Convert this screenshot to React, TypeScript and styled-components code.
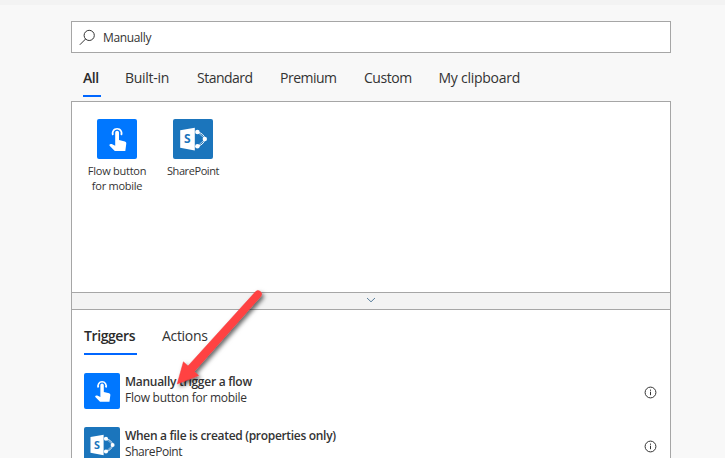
import React from 'react';
import styled, { createGlobalStyle } from 'styled-components';

const GlobalStyle = createGlobalStyle`
  *, *::before, *::after { box-sizing: border-box; }
  body {
    margin: 0;
    background: #f8f8f8;
    color: #333;
    font-family: "Open Sans", "Noto Sans", sans-serif;
    overflow: hidden;
  }
`;

const Page = styled.div`
  position: relative;
  display: flex;
  flex-direction: column;
  align-items: center;
  height: 458px;
  overflow: hidden;
`;

const TopStrip = styled.div`
  flex: none;
  align-self: stretch;
  height: 5px;
  margin-bottom: 16px;
  background: #f3f3f3;
`;

const Picker = styled.main`
  flex: none;
  width: 600px;
  margin-left: 17px;
`;

const SearchBox = styled.div`
  display: flex;
  align-items: center;
  height: 32px;
  padding: 0 7px;
  gap: 7px;
  background: #fff;
  border: 1px solid #a6a6a6;
`;

const Label = styled.span<{ $spacing: number }>`
  letter-spacing: ${p => p.$spacing}px;
  white-space: nowrap;
`;

const SearchText = styled.div`
  padding-top: 2px;
  font-size: 12px;
  line-height: 16px;
`;

const Tabs = styled.nav`
  display: flex;
  height: 48px;
  padding: 16px 0 0 12px;
`;

const Tab = styled.div<{ $active?: boolean; $width: number; $bar?: number }>`
  position: relative;
  flex: none;
  width: ${p => p.$width}px;
  height: 28px;
  font-size: 14px;
  line-height: 17px;
  font-weight: ${p => (p.$active ? 600 : 400)};
  color: ${p => (p.$active ? '#2b2b2b' : '#333')};

  &::after {
    content: '';
    position: absolute;
    left: 0;
    bottom: 0;
    width: ${p => p.$bar ?? 0}px;
    height: 2px;
    background: #0066ff;
  }
`;

const Results = styled.section`
  height: 400px;
  background: #fff;
  border: 1px solid #a6a6a6;
`;

const Connectors = styled.div`
  display: flex;
  height: 190px;
  padding: 17px 0 0 7px;
`;

const Connector = styled.div`
  display: flex;
  flex-direction: column;
  align-items: center;
  width: 76px;
  font-size: 11px;
  line-height: 15px;
  text-align: center;
`;

const ConnectorName = styled.div`
  display: flex;
  flex-direction: column;
  align-items: center;
  margin-top: 4px;
`;

const IconTile = styled.div<{ $size: number; $color: string }>`
  flex: none;
  width: ${p => p.$size}px;
  height: ${p => p.$size}px;
  border-radius: 2px;
  background: ${p => p.$color};

  svg { display: block; width: 100%; height: 100%; }
`;

const Divider = styled.div`
  display: flex;
  align-items: center;
  justify-content: center;
  height: 18px;
  padding-bottom: 2px;
  background: #f3f3f3;
  border: solid #a6a6a6;
  border-width: 1px 0;
`;

const OperationTabs = styled(Tabs)`
  height: 63px;
  padding-top: 17px;
`;

const Operation = styled.div`
  display: flex;
  align-items: center;
  height: 54px;
  padding: 0 13px 18px 12px;
`;

const OperationText = styled.div`
  display: flex;
  flex: 1;
  flex-direction: column;
  align-self: flex-start;
  padding: 1px 0 0 5px;
  font-size: 12px;
  line-height: 16px;
`;

const OperationTitle = styled.div`
  height: 16px;
  font-weight: 600;
`;

const OperationSource = styled.div`
  height: 16px;
`;

const InfoButton = styled.div`
  display: flex;
  padding-top: 2px;
`;

const ArrowOverlay = styled.svg`
  position: absolute;
  left: 165px;
  top: 280px;
  pointer-events: none;
`;

const TouchIcon = ({ size }: { size: number }) => (
  <IconTile $size={size} $color="#0077ff">
    <svg viewBox="0 0 40 40" fill="#fff">
      <path d="M15.2 16.6a5.4 5.4 0 1 1 9.8 0l-1.6-1.1a3.6 3.6 0 1 0-6.6 0z" />
      <path d="M18.2 13.6a1.9 1.9 0 0 1 3.8 0v7.4l5.9 1.4q1.6.4 1.4 2.1L28.3 32H17.8l-5.2-5.2q-.6-.9.3-1.6.9-.5 1.8-.1l3.5 1.6z" />
    </svg>
  </IconTile>
);

const SharePointIcon = ({ size }: { size: number }) => (
  <IconTile $size={size} $color="#1b75bc">
    <svg viewBox="0 0 40 40">
      <g fill="none" stroke="#fff" strokeWidth="1">
        <path d="M24.6 13.2Q30.5 14 32.2 20Q30 26.5 24.6 27" />
        <path d="M24.6 13.2L32.2 20L24.6 27" strokeWidth="0.6" />
      </g>
      <g fill="#fff">
        <circle cx="24.4" cy="13" r="2.3" />
        <circle cx="31.8" cy="20" r="2.2" />
        <circle cx="24.4" cy="27.2" r="2.3" />
        <path d="M7.2 11.2L21.8 8.7V31.4L7.2 28.7z" />
      </g>
      <text x="14.3" y="24.4" textAnchor="middle" fill="#1b75bc" fontFamily="Open Sans, sans-serif" fontSize="12" fontWeight="700">S</text>
    </svg>
  </IconTile>
);

const SearchIcon = () => (
  <svg width="17" height="17" viewBox="0 0 17 17" fill="none" stroke="#333" strokeWidth="1">
    <circle cx="10.2" cy="6.4" r="5.1" />
    <path d="M6.6 10L.8 15.8" />
  </svg>
);

const Chevron = () => (
  <svg width="10" height="6" viewBox="0 0 10 6" fill="none" stroke="#5a7f9c" strokeWidth="1">
    <path d="M1 1L5 4.8L9 1" />
  </svg>
);

const InfoIcon = () => (
  <svg width="13" height="13" viewBox="0 0 13 13" fill="none" stroke="#333" strokeWidth="1">
    <circle cx="6.5" cy="6.5" r="5.4" />
    <path d="M6.5 5.7V9.2M6.5 3.6V4.8" />
  </svg>
);

const Arrow = () => (
  <ArrowOverlay width="115" height="125" viewBox="165 280 115 125">
    <defs>
      <filter id="arrowShadow" x="-20%" y="-20%" width="150%" height="150%">
        <feDropShadow dx="2" dy="2.5" stdDeviation="2" floodColor="#000" floodOpacity="0.6" />
      </filter>
    </defs>
    <path
      filter="url(#arrowShadow)"
      fill="#ff4242"
      stroke="#f03c3e"
      strokeWidth="0.5"
      d="M255.4 291.8A3.5 3.5 0 0 1 260.7 296.4L194.3 371.4L198.6 375.6L177.2 384L183.4 361.8L188 366Z"
    />
  </ArrowOverlay>
);

const categories = [
  { name: 'All', spacing: -0.4, width: 42, bar: 18 },
  { name: 'Built-in', spacing: -0.28, width: 72 },
  { name: 'Standard', spacing: -0.52, width: 83 },
  { name: 'Premium', spacing: -0.5, width: 84 },
  { name: 'Custom', spacing: -0.46, width: 74.5 },
  { name: 'My clipboard', spacing: -0.26, width: 90 },
];

const operations = [
  { icon: TouchIcon, title: 'Manually trigger a flow', titleSpacing: -0.27, source: 'Flow button for mobile', sourceSpacing: -0.26 },
  { icon: SharePointIcon, title: 'When a file is created (properties only)', titleSpacing: -0.31, source: 'SharePoint', sourceSpacing: -0.42 },
];

export default function App() {
  return (
    <Page>
      <GlobalStyle />
      <TopStrip />
      <Picker>
        <SearchBox>
          <SearchIcon />
          <SearchText><Label $spacing={-0.36}>Manually</Label></SearchText>
        </SearchBox>
        <Tabs>
          {categories.map((c, i) => (
            <Tab key={c.name} $active={i === 0} $width={c.width} $bar={c.bar}>
              <Label $spacing={c.spacing}>{c.name}</Label>
            </Tab>
          ))}
        </Tabs>
        <Results>
          <Connectors>
            <Connector>
              <TouchIcon size={40} />
              <ConnectorName>
                <Label $spacing={-0.26}>Flow button</Label>
                <Label $spacing={-0.26}>for mobile</Label>
              </ConnectorName>
            </Connector>
            <Connector>
              <SharePointIcon size={40} />
              <ConnectorName><Label $spacing={-0.42}>SharePoint</Label></ConnectorName>
            </Connector>
          </Connectors>
          <Divider><Chevron /></Divider>
          <OperationTabs>
            <Tab $active $width={78} $bar={53}><Label $spacing={-0.4}>Triggers</Label></Tab>
            <Tab $width={60}><Label $spacing={-0.32}>Actions</Label></Tab>
          </OperationTabs>
          {operations.map(o => (
            <Operation key={o.title}>
              <o.icon size={36} />
              <OperationText>
                <OperationTitle><Label $spacing={o.titleSpacing}>{o.title}</Label></OperationTitle>
                <OperationSource><Label $spacing={o.sourceSpacing}>{o.source}</Label></OperationSource>
              </OperationText>
              <InfoButton><InfoIcon /></InfoButton>
            </Operation>
          ))}
        </Results>
      </Picker>
      <Arrow />
    </Page>
  );
}
